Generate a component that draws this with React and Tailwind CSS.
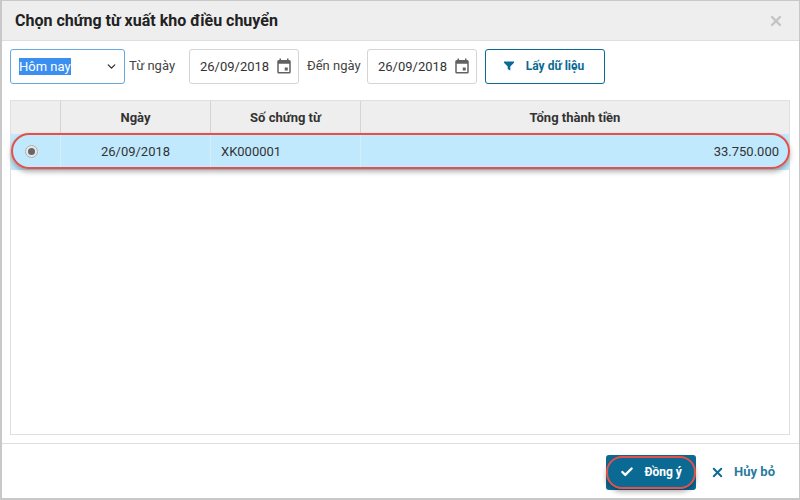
import React from 'react';
import { Check, ChevronDown, X } from 'lucide-react';

function CalendarIcon() {
  return (
    <svg width="18" height="18" viewBox="0 0 24 24" fill="#616161" className="shrink-0 mb-[2px]">
      <path d="M19 4h-1V2h-2v2H8V2H6v2H5a2 2 0 0 0-2 2v14a2 2 0 0 0 2 2h14a2 2 0 0 0 2-2V6a2 2 0 0 0-2-2zm0 16H5V9h14v11zm-6-6h4v4h-4v-4z" />
    </svg>
  );
}

function DateInput({ className }) {
  return (
    <div className={`h-[35px] w-[110px] flex items-center justify-between pl-[10px] pr-[5px] border border-[#d4d4d4] rounded-[3px] text-[13px] text-[#333] ${className || ''}`}>
      <span>26/09/2018</span>
      <CalendarIcon />
    </div>
  );
}

function App() {
  return (
    <div className="w-[800px] h-[500px] flex flex-col bg-white border-2 border-t border-[#c8c8c8] border-r-[1px] font-['Roboto',sans-serif] overflow-hidden">
      {/* title */}
      <div className="h-[40px] shrink-0 flex items-center justify-between bg-[#eeeeee] border-b border-[#dedede] pl-[13px] pr-[15px]">
        <h1 className="text-[16px] font-bold text-[#222]">Chọn chứng từ xuất kho điều chuyển</h1>
        <X size={16} strokeWidth={3.5} className="text-[#c4c4c4]" />
      </div>

      {/* toolbar */}
      <div className="h-[59px] shrink-0 flex items-start pt-[8px] pl-[8px] text-[13px] text-[#444]">
        <div className="h-[35px] w-[115px] flex items-center justify-between pl-[8px] pr-[6px] border border-[#69a8dc] rounded-[3px]">
          <span className="bg-[#3b8ff0] text-white leading-[17px]">Hôm nay</span>
          <ChevronDown size={13} strokeWidth={2.5} className="text-[#333]" />
        </div>
        <span className="ml-[4px] mr-[14px] leading-[34px] w-[46px] whitespace-nowrap">Từ ngày</span>
        <DateInput />
        <span className="ml-[8px] mr-[7px] leading-[34px] w-[53px] whitespace-nowrap">Đến ngày</span>
        <DateInput />
        <button className="ml-[8px] h-[35px] w-[120px] flex items-center justify-center gap-[11px] border border-[#0b6a94] rounded-[3px] text-[#0b6a94] text-[12px] font-bold pr-[3px] pb-[1px]">
          <svg width="12" height="12" viewBox="0 0 12 12" fill="#0b6a94"><path d="M1 1.5h10v1.2L7.3 6.4v4.2L4.7 9V6.4L1 2.7z" /></svg>
          Lấy dữ liệu
        </button>
      </div>

      {/* table */}
      <div className="relative ml-[8px] mr-[9px] h-[335px] shrink-0 border border-[#e0e0e0] text-[13px]">
        <div className="h-[33px] flex bg-[#eeeeee] text-[#333] font-bold text-center leading-[33px]">
          <div className="w-[50px] border-r border-[#d4d4d4]"></div>
          <div className="w-[150px] border-r border-[#d4d4d4]">Ngày</div>
          <div className="w-[150px] border-r border-[#d4d4d4]">Số chứng từ</div>
          <div className="flex-1">Tổng thành tiền</div>
        </div>
        <div className="h-[36px] flex bg-[#c1e9fd] text-[#333] leading-[35px]">
          <div className="w-[50px] border-r border-[#d6edf8] flex items-center justify-center pr-[8px] pb-[1px]">
            <span className="w-[13px] h-[13px] rounded-full bg-[#e8e8e8] border border-[#b0b0b0] flex items-center justify-center">
              <span className="w-[7px] h-[7px] rounded-full bg-[#666]"></span>
            </span>
          </div>
          <div className="w-[150px] border-r border-[#d6edf8] text-center">26/09/2018</div>
          <div className="w-[150px] border-r border-[#d6edf8] pl-[10px]">XK000001</div>
          <div className="flex-1 text-right pr-[10px]">33.750.000</div>
        </div>
        {/* red annotation round the selected row */}
        <div className="absolute left-[0px] right-[-1px] top-[32px] h-[36px] border-2 border-[#e4504a] rounded-[18px] shadow-[0_3px_5px_rgba(0,0,0,0.3)]"></div>
      </div>

      {/* footer */}
      <div className="mt-[8px] flex-1 border-t border-[#dedede] flex items-center justify-end pr-[24px] pt-[2px] text-[13px] font-bold">
        <button className="relative h-[35px] w-[90px] flex items-center justify-center gap-[10px] bg-[#0b6a94] rounded-[3px] text-white text-[12px]">
          <Check size={14} strokeWidth={4} />
          Đồng ý
          <span className="absolute left-0 right-0 top-[1px] bottom-[1px] border-2 border-[#e4504a] rounded-[16px] shadow-[0_3px_5px_rgba(0,0,0,0.3)]"></span>
        </button>
        <button className="ml-[14px] flex items-center gap-[9px] text-[#2b7a9f]">
          <X size={15} strokeWidth={3} className="text-[#0b6a94]" />
          Hủy bỏ
        </button>
      </div>
    </div>
  );
}

export default App;
